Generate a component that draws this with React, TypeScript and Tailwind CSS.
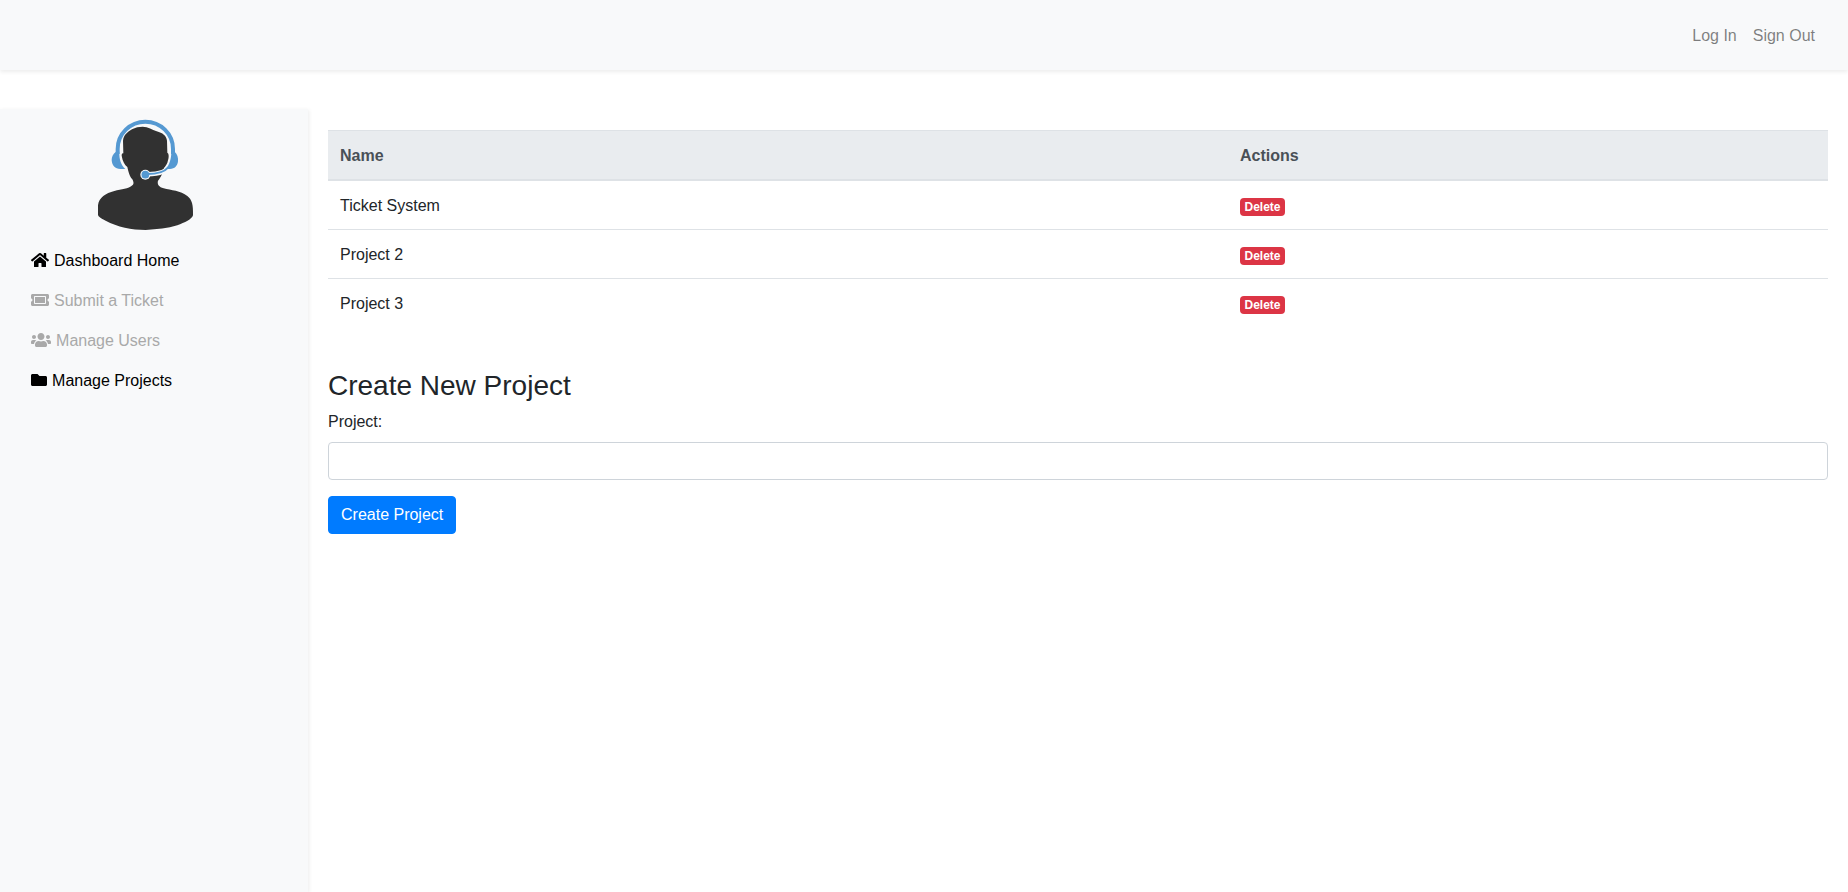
import { FaFolder, FaHome, FaTicketAlt, FaUsers } from 'react-icons/fa';
import type { IconType } from 'react-icons';

type NavItem = { label: string; icon: IconType; size: string; muted?: boolean };

const navItems: NavItem[] = [
  { label: 'Dashboard Home', icon: FaHome, size: 'w-[18px]' },
  { label: 'Submit a Ticket', icon: FaTicketAlt, size: 'w-[18px]', muted: true },
  { label: 'Manage Users', icon: FaUsers, size: 'w-5', muted: true },
  { label: 'Manage Projects', icon: FaFolder, size: 'w-4' },
];

const projects = ['Ticket System', 'Project 2', 'Project 3'];

function SupportAvatar() {
  return (
    <svg viewBox="48 48 300 348" className="block h-[116px] w-[100px]" aria-hidden="true">
      <path
        fill="#313131"
        d="M129 122C131 104 143 96 156 88C166 82 177 80 188 80C205 81 216 88 230 94C248 99 259 107 261 122L262 158C267 160 267 172 264 181C262 192 258 197 252 204C247 222 243 232 234 242C231 253 237 261 251 265C273 271 302 272 322 288C336 299 340 314 339 346C336 358 314 368 292 376C263 385 231 388 197 390C155 389 112 381 77 362C62 354 55 350 54 344L54 316C57 292 77 280 103 273C125 267 145 268 157 256C163 250 160 246 158 239C149 231 145 215 142 201C134 195 128 184 125 167C125 161 127 160 130 160Z"
      />
      <path fill="none" stroke="#f8f9fa" strokeWidth="13" d="M202 223C237 222 262 215 272 197" />
      <circle cx="196" cy="224" r="15" fill="#f8f9fa" />
      <path fill="none" stroke="#5599d2" strokeWidth="12" d="M113 162V147A83 82 0 0 1 279 147V162" />
      <path
        fill="#5599d2"
        d="M108 155C99 162 95 170 95 180C96 196 105 207 121 207H136C123 194 117 178 118 155ZM284 155C292 163 295 171 294 184C293 197 284 207 270 207H257C269 193 274 176 274 155Z"
      />
      <path fill="none" stroke="#5599d2" strokeWidth="6" d="M202 222C233 222 253 216 265 202" />
      <circle cx="196" cy="224" r="11.5" fill="#5599d2" />
    </svg>
  );
}

export default function App() {
  return (
    <div className="flex h-screen flex-col overflow-hidden bg-white font-['Liberation_Sans',Arial,sans-serif] text-base text-[#212529]">
      <header className="flex h-[70px] shrink-0 items-center justify-end bg-[#f8f9fa] pt-0.5 pr-[25px] shadow-[0_2px_4px_rgba(0,0,0,0.075)]">
        <nav className="flex text-black/50">
          <a href="#login" className="p-2">Log In</a>
          <a href="#signout" className="p-2">Sign Out</a>
        </nav>
      </header>

      <div className="mt-[39px] flex min-h-0 flex-1">
        <aside className="w-[308px] shrink-0 bg-[#f8f9fa] pt-[7px] shadow-[1px_1px_4px_rgba(0,0,0,0.08)]">
          <div className="pl-24">
            <SupportAvatar />
          </div>
          <nav className="mt-[9px] flex flex-col px-[31px]">
            {navItems.map(({ label, icon: Icon, size, muted }) => (
              <a key={label} href="#" className={muted ? 'py-2 text-[#a9a9a9]' : 'py-2 text-black'}>
                <Icon className={`mr-[0.6px] inline-block h-4 align-[-2px] ${size}`} /> {label}
              </a>
            ))}
          </nav>
        </aside>

        <main className="min-w-0 flex-1 pt-[21px] pr-5 pl-5">
          <table className="w-full table-fixed border-collapse text-left">
            <thead className="bg-[#e9ecef] text-[#495057]">
              <tr>
                <th className="w-[900px] border-t border-b-2 border-[#dee2e6] px-3 pt-[13px] pb-[11px] font-bold">Name</th>
                <th className="border-t border-b-2 border-[#dee2e6] px-3 pt-[13px] pb-[11px] font-bold">Actions</th>
              </tr>
            </thead>
            <tbody>
              {projects.map((project) => (
                <tr key={project}>
                  <td className="border-t border-[#dee2e6] px-3 pt-[13px] pb-[11px]">{project}</td>
                  <td className="border-t border-[#dee2e6] px-3 pt-[13px] pb-[11px]">
                    <button className="inline-block w-[45px] rounded-[4px] bg-[#dc3545] py-[3px] align-baseline text-xs leading-3 font-bold text-white">
                      Delete
                    </button>
                  </td>
                </tr>
              ))}
            </tbody>
          </table>

          <form className="mt-[42px]">
            <h3 className="mb-[7px] text-[28px] leading-[1.2] font-medium">Create New Project</h3>
            <label htmlFor="project" className="mb-2 block">Project:</label>
            <input
              id="project"
              type="text"
              className="block h-[38px] w-full rounded border border-[#ced4da] bg-white px-3 py-1.5"
            />
            <button
              type="button"
              className="mt-4 block h-[38px] rounded border border-[#007bff] bg-[#007bff] px-3 text-white"
            >
              Create Project
            </button>
          </form>
        </main>
      </div>
    </div>
  );
}
